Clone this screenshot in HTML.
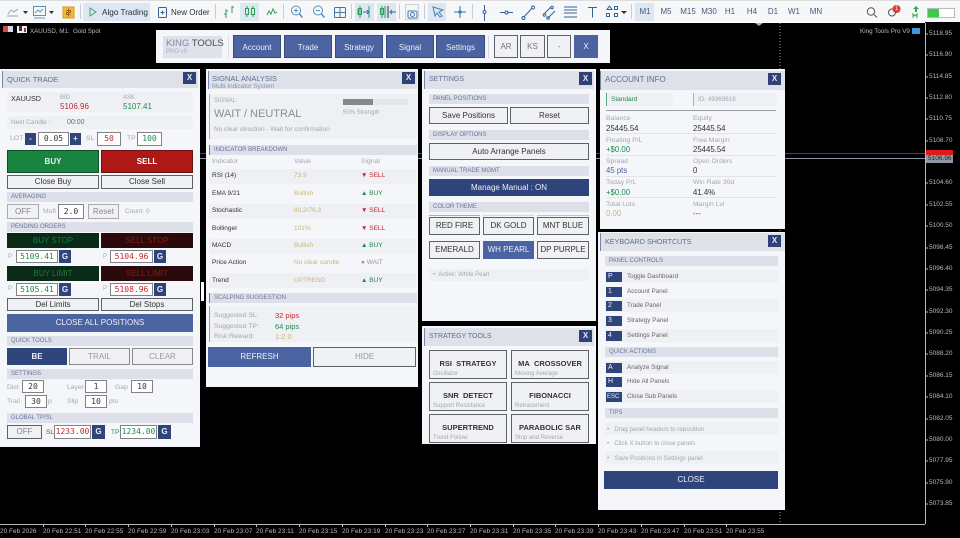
<!DOCTYPE html>
<html><head><meta charset="utf-8"><style>
html,body{margin:0;padding:0;background:#000}
#r{position:relative;width:960px;height:538px;overflow:hidden;background:#000;font-family:"Liberation Sans",sans-serif;font-size:8px;color:#333;filter:blur(.3px)}
#r div,#r svg{position:absolute}
.t{white-space:nowrap;height:10px;line-height:10px}
.p{background:#f5f6fa}
.h{background:#dfe1e9;border-left:1px solid #7486ad}
.ht{font-size:7.500px;color:#5d6d94;white-space:nowrap;height:10px;line-height:10px}
.x{background:#2f4176;color:#e8eaf4;font-weight:bold;font-size:8px;text-align:center}
.b{background:#dde0e8;color:#66759a;font-size:6px;line-height:10px;height:10px;white-space:nowrap;text-indent:4px}
.btn{background:#f0f1f5;border:1px solid #5f6168;box-sizing:border-box;text-align:center;color:#333;white-space:nowrap}
.blue{background:#4b63a0;color:#eef0f8;text-align:center;white-space:nowrap}
.navy{background:#30447c;color:#eef0f8;text-align:center;white-space:nowrap}
.i{background:#fff;border:1px solid #808288;box-sizing:border-box;font-family:"DejaVu Sans Mono","Liberation Mono",monospace;font-size:8px;text-align:center;white-space:nowrap;color:#333}
.gr{color:#1f8a4c}.rd{color:#c0272d}
.l{color:#a4a7b0;font-size:6.800px}
.row{background:#eff0f4}
.ax{color:#b8b8b8;font-size:6.500px;white-space:nowrap;height:9px;line-height:9px}
.tb{color:#2b2f3a;font-size:8.200px;white-space:nowrap;height:12px;line-height:12px}
.tf{color:#44597f;font-size:8px;white-space:nowrap;height:12px;line-height:12px;text-align:center;width:20px;top:6px}
.sep{background:#c8ccd2;width:1px;top:4px;height:15px}
.hi{background:#dce7f3}
.gd{background:#e2e3e7;height:1px}
.r{font-size:6.500px}
.k{font-size:6.300px;color:#666;left:627px}
.kb{left:606px;width:16px;height:10px;line-height:10px;font-size:7px;text-align:left;text-indent:2px}
.st{font-weight:bold;font-size:7.500px;width:78px;height:29px;line-height:25px}
.v{font-size:7.800px}
</style></head><body><div id="r">

<!-- toolbar -->
<div style="left:0;top:0;width:960px;height:22px;background:#f6f7f8"></div>
<div style="left:0;top:0;width:960px;height:1px;background:#ddd"></div>
<div style="left:0;top:22px;width:925px;height:1px;background:#fff"></div>
<div class="hi" style="left:83px;top:3px;width:67px;height:18px"></div>
<div class="hi" style="left:240px;top:3px;width:19px;height:18px"></div>
<div class="hi" style="left:355px;top:3px;width:19px;height:18px"></div>
<div class="hi" style="left:377px;top:3px;width:19px;height:18px"></div>
<div class="hi" style="left:428px;top:3px;width:18px;height:18px"></div>
<div class="hi" style="left:635px;top:3px;width:19px;height:18px"></div>
<div class="sep" style="left:80px"></div><div class="sep" style="left:215px"></div><div class="sep" style="left:283px"></div><div class="sep" style="left:351px"></div><div class="sep" style="left:399px"></div><div class="sep" style="left:424px"></div><div class="sep" style="left:472px"></div><div class="sep" style="left:631px"></div>
<svg style="left:0;top:0" width="960" height="22" fill="none" stroke-width="1">
<path d="M7 16h11M8 14l3-4 3 2 4-3" stroke="#8fa6c8"/>
<path d="M23 11h5l-2.500 3z" fill="#333"/>
<rect x="33.500" y="6.500" width="12" height="9" stroke="#5b8fb8"/><path d="M35 13l3-3 2 2 3-3M34 18h11" stroke="#5aa"/>
<path d="M49 11h5l-2.500 3z" fill="#333"/>
<rect x="63" y="7" width="11" height="11" fill="#f0b93a" stroke="#d99a1e"/><path d="M68.500 8.500v8M66.500 10.500h4v2h-4v2h4" stroke="#a0651a"/>
<path d="M90 8l6 4-6 4z" stroke="#4aa36a"/>
<rect x="158.500" y="7.500" width="8" height="10" rx="1" stroke="#3b5f9a"/><path d="M160.500 12.500h4M162.500 10.500v4" stroke="#3b5f9a"/>
<path d="M226 9v9M224 14h2M226 11h2M232 6v7M232 7h2" stroke="#2aa052"/>
<path d="M247 6v11M253 6v11" stroke="#2aa052"/><rect x="245.500" y="8.500" width="3" height="6" stroke="#2aa052" fill="#dce7f3"/><rect x="251.500" y="8.500" width="3" height="6" stroke="#2aa052" fill="#dce7f3"/>
<path d="M267 15l2-4 2 3 2-5 2 4 2-1" stroke="#2aa052"/>
<circle cx="296" cy="10.500" r="4.500" stroke="#5a8fb5"/><path d="M299.500 14l3 3.500" stroke="#5a8fb5" stroke-width="1.500"/><path d="M294 10.500h4M296 8.500v4" stroke="#5a8fb5"/>
<circle cx="318" cy="10.500" r="4.500" stroke="#5a8fb5"/><path d="M321.500 14l3 3.500" stroke="#5a8fb5" stroke-width="1.500"/><path d="M316 10.500h4" stroke="#5a8fb5"/>
<rect x="334.500" y="7.500" width="11" height="10" rx="1" stroke="#3c78b0"/><path d="M340 7.500v10M334.500 12.500h11" stroke="#3c78b0"/>
<path d="M360 6v12M358 9v6M369 6v12" stroke="#2aa052"/><rect x="358.500" y="8.500" width="3" height="6" stroke="#2aa052"/><path d="M363 12h6M367 10l2 2-2 2" stroke="#2f6fb0"/>
<path d="M382 6v12M385 6v12" stroke="#2aa052"/><rect x="380.500" y="8.500" width="3" height="6" stroke="#2aa052"/><path d="M388 6v12" stroke="#333"/><path d="M390 12h6M392 10l-2 2 2 2" stroke="#2f6fb0"/>
<rect x="405.500" y="4.500" width="13" height="15" stroke="#aaa" stroke-dasharray="1 1"/><rect x="408" y="11" width="9" height="7" rx="1" stroke="#3f78ad"/><circle cx="412.500" cy="14.500" r="2" stroke="#3f78ad"/>
<path d="M433 7l10 3-4 2 3 4-2 1-3-4-2 3z" stroke="#4a80b5"/>
<path d="M460 6v12M454 12h12" stroke="#2f7cb5"/><circle cx="460" cy="12" r="1.200" stroke="#2f7cb5"/>
<path d="M484.500 5v16" stroke="#34639a"/><circle cx="484.500" cy="12" r="1.500" stroke="#34639a" fill="#f6f7f8"/>
<path d="M500 12.500h13" stroke="#34639a"/><circle cx="506.500" cy="12.500" r="1.500" stroke="#34639a" fill="#f6f7f8"/>
<path d="M523 18l10-11" stroke="#34639a"/><circle cx="523.500" cy="18" r="1.500" stroke="#34639a" fill="#f6f7f8"/><circle cx="533" cy="7.500" r="1.500" stroke="#34639a" fill="#f6f7f8"/>
<path d="M544 14l7-7M548 18l7-7" stroke="#34639a"/><circle cx="544.500" cy="15" r="1.300" stroke="#34639a"/><circle cx="552" cy="7.500" r="1.300" stroke="#34639a"/><circle cx="548" cy="18" r="1.300" stroke="#34639a"/>
<path d="M564 7h13M564 10h13M564 13h13M564 17h13" stroke="#34639a"/>
<path d="M588 7.500h9M592.500 7.500v10" stroke="#34639a"/>
<path d="M609.500 6l2.500 3.500h-5z" stroke="#34639a"/><rect x="614.500" y="6.500" width="3" height="3" stroke="#34639a"/><rect x="606.500" y="13.500" width="3" height="3" stroke="#34639a"/><rect x="614.500" y="13.500" width="3" height="3" stroke="#34639a"/>
<path d="M621 11h6l-3 3z" fill="#333"/>
<circle cx="871" cy="11.500" r="3.700" stroke="#555"/><path d="M874 14.500l3 3" stroke="#555"/>
<circle cx="892" cy="12.500" r="3.500" stroke="#555"/><circle cx="896.500" cy="9" r="4" fill="#e23a2e"/>
<path d="M916 6l3 3h-2v3h-2v-3h-2z" fill="#2faa52"/><path d="M913 18v-4l2 2 2-2v4" stroke="#2faa52"/>
<rect x="927.500" y="8.500" width="27" height="9" stroke="#bbb" fill="#fff"/><rect x="928" y="9" width="11" height="8" fill="#3fc94a"/>
</svg>
<div class="tb" style="left:102px;top:7px">Algo Trading</div>
<div class="tb" style="left:171px;top:7px;font-size:8px">New Order</div>
<div class="tf" style="left:635px">M1</div><div class="tf" style="left:656px">M5</div><div class="tf" style="left:678px">M15</div><div class="tf" style="left:699px">M30</div><div class="tf" style="left:720px">H1</div><div class="tf" style="left:742px">H4</div><div class="tf" style="left:763px">D1</div><div class="tf" style="left:784px">W1</div><div class="tf" style="left:806px">MN</div>
<div class="t" style="left:895px;top:4px;font-size:6px;color:#fff">1</div>

<!-- chart -->
<svg style="left:0;top:23px" width="960" height="515" fill="none">
<rect x="3" y="3" width="10" height="6" fill="#d8d8e8"/><rect x="3" y="3" width="5" height="6" fill="#d44"/>
<rect x="17" y="3" width="10" height="7" fill="#eee"/><rect x="19" y="3" width="3" height="5" fill="#334"/><rect x="24" y="5" width="2" height="4" fill="#a33"/>
<path d="M925.500 0V501" stroke="#b8b8b8"/>
<path d="M0 501.500H925" stroke="#b8b8b8"/>
<path d="M925 11h3M925 32h3M925 54h3M925 75h3M925 96h3M925 118h3M925 160h3M925 182h3M925 203h3M925 225h3M925 246h3M925 267h3M925 289h3M925 310h3M925 331h3M925 353h3M925 374h3M925 396h3M925 417h3M925 438h3M925 460h3M925 481h3" stroke="#b8b8b8"/>
<path d="M43.500 501v3M85.500 501v3M128.500 501v3M171.500 501v3M214.500 501v3M256.500 501v3M299.500 501v3M342.500 501v3M385.500 501v3M427.500 501v3M470.500 501v3M513.500 501v3M555.500 501v3M598.500 501v3M641.500 501v3M684.500 501v3M726.500 501v3" stroke="#b8b8b8"/>
<path d="M0 130.500H925" stroke="#a01c1c"/>
<path d="M0 135.500H925" stroke="#8a93a0"/>
<path d="M780 0V500" stroke="#9a9a9a" stroke-dasharray="1 2"/>
<path d="M755 0h8l-4 3z" fill="#aaa"/>
<rect x="201" y="259" width="3" height="19" fill="#fff"/>
<path d="M645 204h20" stroke="#2aa052" stroke-width="2"/>
<rect x="912" y="5" width="8" height="6" fill="#3a9ae0"/>
</svg>
<div class="ax" style="left:30px;top:27px;font-size:6.200px">XAUUSD, M1:&nbsp; Gold Spot</div>
<div class="ax" style="left:860px;top:27px;font-size:6.300px">King Tools Pro V9</div>
<!-- price axis -->
<div class="ax" style="left:929px;top:29px">5118.95</div><div class="ax" style="left:929px;top:50px">5116.90</div><div class="ax" style="left:929px;top:72px">5114.85</div><div class="ax" style="left:929px;top:93px">5112.80</div><div class="ax" style="left:929px;top:114px">5110.75</div><div class="ax" style="left:929px;top:136px">5108.70</div><div class="ax" style="left:929px;top:178px">5104.60</div><div class="ax" style="left:929px;top:200px">5102.55</div><div class="ax" style="left:929px;top:221px">5100.50</div><div class="ax" style="left:929px;top:243px">5098.45</div><div class="ax" style="left:929px;top:264px">5096.40</div><div class="ax" style="left:929px;top:285px">5094.35</div><div class="ax" style="left:929px;top:307px">5092.30</div><div class="ax" style="left:929px;top:328px">5090.25</div><div class="ax" style="left:929px;top:349px">5088.20</div><div class="ax" style="left:929px;top:371px">5086.15</div><div class="ax" style="left:929px;top:392px">5084.10</div><div class="ax" style="left:929px;top:414px">5082.05</div><div class="ax" style="left:929px;top:435px">5080.00</div><div class="ax" style="left:929px;top:456px">5077.95</div><div class="ax" style="left:929px;top:478px">5075.90</div><div class="ax" style="left:929px;top:499px">5073.85</div>
<div style="left:926px;top:150px;width:27px;height:6px;background:#e01818"></div>
<div class="ax" style="left:926px;top:155px;width:27px;height:8px;line-height:8px;background:#8e97a3;color:#222;text-indent:2px">5106.96</div>
<!-- time axis -->
<div class="ax" style="left:0;top:527px">20 Feb 2026</div><div class="ax" style="left:43px;top:527px">20 Feb 22:51</div><div class="ax" style="left:85px;top:527px">20 Feb 22:55</div><div class="ax" style="left:128px;top:527px">20 Feb 22:59</div><div class="ax" style="left:171px;top:527px">20 Feb 23:03</div><div class="ax" style="left:214px;top:527px">20 Feb 23:07</div><div class="ax" style="left:256px;top:527px">20 Feb 23:11</div><div class="ax" style="left:299px;top:527px">20 Feb 23:15</div><div class="ax" style="left:342px;top:527px">20 Feb 23:19</div><div class="ax" style="left:385px;top:527px">20 Feb 23:23</div><div class="ax" style="left:427px;top:527px">20 Feb 23:27</div><div class="ax" style="left:470px;top:527px">20 Feb 23:31</div><div class="ax" style="left:513px;top:527px">20 Feb 23:35</div><div class="ax" style="left:555px;top:527px">20 Feb 23:39</div><div class="ax" style="left:598px;top:527px">20 Feb 23:43</div><div class="ax" style="left:641px;top:527px">20 Feb 23:47</div><div class="ax" style="left:684px;top:527px">20 Feb 23:51</div><div class="ax" style="left:726px;top:527px">20 Feb 23:55</div>

<!-- top bar -->
<div class="p" style="left:156px;top:30px;width:454px;height:33px"></div>
<div style="left:163px;top:36px;width:59px;height:22px;background:#e0e2ea"></div>
<div class="t" style="left:166px;top:38px;font-size:9.500px;height:11px;line-height:11px;color:#7d8aa8">KING <span style="color:#4a4f5e">TOOLS</span></div>
<div class="t" style="left:166px;top:47px;font-size:6px;color:#aab">PRO v9</div>
<div style="left:228px;top:36px;width:1px;height:22px;background:#dcdee5"></div>
<div class="blue" style="left:233px;top:35px;width:48px;height:23px;line-height:23px;border:1px solid #39497c;box-sizing:border-box">Account</div>
<div class="blue" style="left:284px;top:35px;width:48px;height:23px;line-height:23px;border:1px solid #39497c;box-sizing:border-box">Trade</div>
<div class="blue" style="left:335px;top:35px;width:48px;height:23px;line-height:23px;border:1px solid #39497c;box-sizing:border-box">Strategy</div>
<div class="blue" style="left:386px;top:35px;width:48px;height:23px;line-height:23px;border:1px solid #39497c;box-sizing:border-box">Signal</div>
<div class="blue" style="left:436px;top:35px;width:49px;height:23px;line-height:23px;border:1px solid #39497c;box-sizing:border-box">Settings</div>
<div style="left:488px;top:36px;width:1px;height:22px;background:#d5d7de"></div>
<div class="btn" style="left:494px;top:35px;width:24px;height:23px;line-height:21px;color:#777">AR</div>
<div class="btn" style="left:520px;top:35px;width:25px;height:23px;line-height:21px;color:#777">KS</div>
<div class="btn" style="left:547px;top:35px;width:24px;height:23px;line-height:21px;color:#777">-</div>
<div class="blue" style="left:574px;top:35px;width:24px;height:23px;line-height:23px">X</div>

<!-- QUICK TRADE -->
<div class="p" style="left:0;top:69px;width:200px;height:378px"></div>
<div class="h" style="left:2px;top:71px;width:195px;height:17px"></div>
<div class="ht" style="left:7px;top:75px">QUICK TRADE</div>
<div class="x" style="left:183px;top:72px;width:13px;height:12px;line-height:12px">X</div>
<div class="row" style="left:7px;top:92px;width:186px;height:20px"></div>
<div class="t" style="left:11px;top:94px;font-size:7.200px">XAUUSD</div>
<div class="t l" style="left:60px;top:93px;font-size:6px">BID</div><div class="t rd" style="left:60px;top:102px;font-size:8px">5106.96</div>
<div class="t l" style="left:123px;top:93px;font-size:6px">ASK</div><div class="t gr" style="left:123px;top:102px;font-size:8px">5107.41</div>
<div class="row" style="left:7px;top:116px;width:186px;height:13px"></div>
<div class="t l" style="left:11px;top:118px;font-size:6.500px">Next Candle :</div><div class="t" style="left:67px;top:118px;font-size:7px;color:#5d6d94">00:00</div>
<div class="t l" style="left:10px;top:134px">LOT</div>
<div class="navy" style="left:25px;top:133px;width:11px;height:12px;line-height:11px;font-weight:bold">-</div>
<div class="i" style="left:38px;top:132px;width:31px;height:14px;line-height:12px">0.05</div>
<div class="navy" style="left:70px;top:133px;width:11px;height:12px;line-height:11px;font-weight:bold">+</div>
<div class="t l" style="left:86px;top:134px">SL</div><div class="i rd" style="left:97px;top:132px;width:24px;height:14px;line-height:12px">50</div>
<div class="t l" style="left:127px;top:134px">TP</div><div class="i gr" style="left:137px;top:132px;width:25px;height:14px;line-height:12px">100</div>
<div style="left:7px;top:150px;width:92px;height:23px;line-height:21px;background:#17843f;border:1px solid #0f4f28;box-sizing:border-box;color:#eef;text-align:center;font-weight:bold">BUY</div>
<div style="left:101px;top:150px;width:92px;height:23px;line-height:21px;background:#b01818;border:1px solid #6a1212;box-sizing:border-box;color:#fff;text-align:center;font-weight:bold">SELL</div>
<div class="btn" style="left:7px;top:175px;width:92px;height:14px;line-height:12px">Close Buy</div>
<div class="btn" style="left:101px;top:175px;width:92px;height:14px;line-height:12px">Close Sell</div>
<div class="b" style="left:7px;top:192px;width:186px">AVERAGING</div>
<div class="btn" style="left:7px;top:204px;width:32px;height:15px;line-height:13px;color:#888;border-color:#aaa">OFF</div>
<div class="t l" style="left:43px;top:207px">Mult</div>
<div class="i" style="left:58px;top:204px;width:26px;height:15px;line-height:13px">2.0</div>
<div class="btn" style="left:88px;top:204px;width:31px;height:15px;line-height:13px;color:#888;border-color:#aaa">Reset</div>
<div class="t l" style="left:125px;top:207px;font-size:6.500px">Count: 0</div>
<div class="b" style="left:7px;top:222px;width:186px">PENDING ORDERS</div>
<div class="gr" style="left:7px;top:233px;width:92px;height:15px;line-height:15px;background:#0a2a18;text-align:center;color:#1c7a40">BUY STOP</div>
<div class="rd" style="left:101px;top:233px;width:92px;height:15px;line-height:15px;background:#2a0a0a;text-align:center;color:#8b1a1a">SELL STOP</div>
<div class="t l" style="left:8px;top:252px;font-size:6px">P</div><div class="i gr" style="left:16px;top:250px;width:42px;height:13px;line-height:11px">5109.41</div><div class="navy" style="left:59px;top:250px;width:12px;height:13px;line-height:13px;font-weight:bold">G</div>
<div class="t l" style="left:103px;top:252px;font-size:6px">P</div><div class="i rd" style="left:110px;top:250px;width:43px;height:13px;line-height:11px">5104.96</div><div class="navy" style="left:154px;top:250px;width:12px;height:13px;line-height:13px;font-weight:bold">G</div>
<div style="left:7px;top:266px;width:92px;height:15px;line-height:15px;background:#0a2a18;text-align:center;color:#1c7a40">BUY LIMIT</div>
<div style="left:101px;top:266px;width:92px;height:15px;line-height:15px;background:#2a0a0a;text-align:center;color:#8b1a1a">SELL LIMIT</div>
<div class="t l" style="left:8px;top:284px;font-size:6px">P</div><div class="i gr" style="left:16px;top:283px;width:42px;height:13px;line-height:11px">5105.41</div><div class="navy" style="left:59px;top:283px;width:12px;height:13px;line-height:13px;font-weight:bold">G</div>
<div class="t l" style="left:103px;top:284px;font-size:6px">P</div><div class="i rd" style="left:110px;top:283px;width:43px;height:13px;line-height:11px">5108.96</div><div class="navy" style="left:154px;top:283px;width:12px;height:13px;line-height:13px;font-weight:bold">G</div>
<div class="btn" style="left:7px;top:298px;width:92px;height:13px;line-height:11px">Del Limits</div>
<div class="btn" style="left:101px;top:298px;width:92px;height:13px;line-height:11px">Del Stops</div>
<div class="blue" style="left:7px;top:314px;width:186px;height:18px;line-height:18px">CLOSE ALL POSITIONS</div>
<div class="b" style="left:7px;top:336px;width:186px">QUICK TOOLS</div>
<div class="navy" style="left:7px;top:348px;width:60px;height:17px;line-height:17px;font-weight:bold">BE</div>
<div class="btn" style="left:69px;top:348px;width:61px;height:17px;line-height:15px;color:#999;border-color:#888">TRAIL</div>
<div class="btn" style="left:132px;top:348px;width:61px;height:17px;line-height:15px;color:#999;border-color:#888">CLEAR</div>
<div class="b" style="left:7px;top:369px;width:186px">SETTINGS</div>
<div class="t l" style="left:7px;top:383px">Dist</div><div class="i" style="left:22px;top:380px;width:22px;height:13px;line-height:11px">20</div>
<div class="t l" style="left:67px;top:383px">Layer</div><div class="i" style="left:85px;top:380px;width:22px;height:13px;line-height:11px">1</div>
<div class="t l" style="left:115px;top:383px">Gap</div><div class="i" style="left:131px;top:380px;width:22px;height:13px;line-height:11px">10</div>
<div class="t l" style="left:7px;top:397px">Trail</div><div class="i" style="left:25px;top:395px;width:22px;height:13px;line-height:11px">30</div><div class="t l" style="left:48px;top:397px">p</div>
<div class="t l" style="left:67px;top:397px">Slip</div><div class="i" style="left:85px;top:395px;width:22px;height:13px;line-height:11px">10</div><div class="t l" style="left:109px;top:397px">pts</div>
<div class="b" style="left:7px;top:413px;width:186px">GLOBAL TP/SL</div>
<div class="btn" style="left:7px;top:425px;width:35px;height:14px;line-height:12px;color:#888">OFF</div>
<div class="t rd" style="left:46px;top:428px;font-size:6.500px">SL</div><div class="i rd" style="left:54px;top:425px;width:37px;height:14px;line-height:12px">1233.00</div><div class="navy" style="left:92px;top:425px;width:13px;height:14px;line-height:14px;font-weight:bold">G</div>
<div class="t gr" style="left:111px;top:428px;font-size:6.500px">TP</div><div class="i gr" style="left:120px;top:425px;width:37px;height:14px;line-height:12px">1234.00</div><div class="navy" style="left:158px;top:425px;width:13px;height:14px;line-height:14px;font-weight:bold">G</div>

<!-- SIGNAL -->
<div class="p" style="left:206px;top:69px;width:212px;height:318px"></div>
<div class="h" style="left:208px;top:71px;width:208px;height:18px"></div>
<div class="ht" style="left:212px;top:74px">SIGNAL ANALYSIS</div>
<div class="t" style="left:212px;top:82px;font-size:6.300px;color:#8a93aa">Multi-Indicator System</div>
<div class="x" style="left:402px;top:72px;width:13px;height:12px;line-height:12px">X</div>
<div class="row" style="left:209px;top:94px;width:207px;height:45px;border-left:1px solid #aab"></div>
<div class="t l" style="left:214px;top:96px;font-size:6px">SIGNAL:</div>
<div class="t" style="left:214px;top:107px;font-size:11px;height:15px;line-height:15px;color:#8a8c93">WAIT / NEUTRAL</div>
<div style="left:343px;top:99px;width:65px;height:6px;background:#e4e6ec"></div><div style="left:343px;top:99px;width:30px;height:6px;background:#85878e"></div>
<div class="t l" style="left:343px;top:108px;font-size:6px">50% Strength</div>
<div class="t l" style="left:214px;top:125px;font-size:6.500px">No clear direction - Wait for confirmation</div>
<div class="b" style="left:209px;top:145px;width:207px;border-left:1px solid #778">INDICATOR BREAKDOWN</div>
<div class="t l" style="left:212px;top:157px">Indicator</div><div class="t l" style="left:294px;top:157px">Value</div><div class="t l" style="left:361px;top:157px">Signal</div>
<div class="row" style="left:209px;top:169px;width:207px;height:15px"></div>
<div class="row" style="left:209px;top:204px;width:207px;height:15px"></div>
<div class="row" style="left:209px;top:239px;width:207px;height:15px"></div>
<div class="row" style="left:209px;top:273px;width:207px;height:15px"></div>
<div class="t r" style="left:212px;top:171px">RSI (14)</div><div class="t r" style="left:294px;top:171px;color:#c8b678">73.9</div><div class="t rd r" style="left:361px;top:171px">▼ SELL</div>
<div class="t r" style="left:212px;top:189px">EMA 9/21</div><div class="t r" style="left:294px;top:189px;color:#c8b678">Bullish</div><div class="t gr r" style="left:361px;top:189px">▲ BUY</div>
<div class="t r" style="left:212px;top:206px">Stochastic</div><div class="t r" style="left:294px;top:206px;color:#c8b678">80.2/76.3</div><div class="t rd r" style="left:361px;top:206px">▼ SELL</div>
<div class="t r" style="left:212px;top:224px">Bollinger</div><div class="t r" style="left:294px;top:224px;color:#c8b678">101%</div><div class="t rd r" style="left:361px;top:224px">▼ SELL</div>
<div class="t r" style="left:212px;top:241px">MACD</div><div class="t r" style="left:294px;top:241px;color:#c8b678">Bullish</div><div class="t gr r" style="left:361px;top:241px">▲ BUY</div>
<div class="t r" style="left:212px;top:258px">Price Action</div><div class="t r" style="left:294px;top:258px;color:#c8b678">No clear candle</div><div class="t r" style="left:361px;top:258px;color:#999">● WAIT</div>
<div class="t r" style="left:212px;top:276px">Trend</div><div class="t r" style="left:294px;top:276px;color:#c8b678">UPTREND</div><div class="t gr r" style="left:361px;top:276px">▲ BUY</div>
<div class="b" style="left:209px;top:293px;width:207px;border-left:1px solid #778">SCALPING SUGGESTION</div>
<div class="row" style="left:209px;top:306px;width:207px;height:36px;border-left:1px solid #99a"></div>
<div class="t l" style="left:214px;top:311px">Suggested SL:</div><div class="t rd" style="left:275px;top:311px;font-size:7.500px">32 pips</div>
<div class="t l" style="left:214px;top:322px">Suggested TP:</div><div class="t gr" style="left:275px;top:322px;font-size:7.500px">64 pips</div>
<div class="t l" style="left:214px;top:332px">Risk:Reward:</div><div class="t" style="left:275px;top:332px;font-size:7.500px;color:#c8b678">1:2.0</div>
<div class="blue" style="left:208px;top:347px;width:103px;height:20px;line-height:20px;font-size:8px">REFRESH</div>
<div class="btn" style="left:313px;top:347px;width:103px;height:20px;line-height:18px;color:#999;font-size:8px">HIDE</div>

<!-- SETTINGS -->
<div class="p" style="left:422px;top:69px;width:174px;height:252px"></div>
<div class="h" style="left:424px;top:71px;width:169px;height:18px"></div>
<div class="ht" style="left:429px;top:75px;font-size:7px">SETTINGS</div>
<div class="x" style="left:579px;top:72px;width:13px;height:13px;line-height:13px">X</div>
<div class="b" style="left:429px;top:94px;width:160px">PANEL POSITIONS</div>
<div class="btn" style="left:429px;top:107px;width:79px;height:17px;line-height:15px">Save Positions</div>
<div class="btn" style="left:510px;top:107px;width:79px;height:17px;line-height:15px">Reset</div>
<div class="b" style="left:429px;top:130px;width:160px">DISPLAY OPTIONS</div>
<div class="btn" style="left:429px;top:143px;width:160px;height:17px;line-height:15px">Auto Arrange Panels</div>
<div class="b" style="left:429px;top:166px;width:160px">MANUAL TRADE MGMT</div>
<div class="navy" style="left:429px;top:179px;width:160px;height:17px;line-height:17px">Manage Manual : ON</div>
<div class="b" style="left:429px;top:202px;width:160px">COLOR THEME</div>
<div style="left:429px;top:215px;width:51px;height:1px;background:#e09a9a"></div><div style="left:483px;top:215px;width:51px;height:1px;background:#e8d89a"></div><div style="left:537px;top:215px;width:52px;height:1px;background:#b4c4e4"></div>
<div class="btn" style="left:429px;top:217px;width:51px;height:18px;line-height:16px">RED FIRE</div>
<div class="btn" style="left:483px;top:217px;width:51px;height:18px;line-height:16px">DK GOLD</div>
<div class="btn" style="left:537px;top:217px;width:52px;height:18px;line-height:16px">MNT BLUE</div>
<div class="btn" style="left:429px;top:241px;width:51px;height:18px;line-height:16px">EMERALD</div>
<div class="blue" style="left:483px;top:241px;width:51px;height:18px;line-height:18px">WH PEARL</div>
<div class="btn" style="left:537px;top:241px;width:52px;height:18px;line-height:16px">DP PURPLE</div>
<div class="row" style="left:429px;top:269px;width:160px;height:12px"></div>
<div class="t l" style="left:433px;top:270px;font-size:6px">• &nbsp;Active: White Pearl</div>

<!-- STRATEGY -->
<div class="p" style="left:422px;top:326px;width:174px;height:118px"></div>
<div class="h" style="left:424px;top:328px;width:169px;height:18px"></div>
<div class="ht" style="left:429px;top:332px;font-size:7px">STRATEGY TOOLS</div>
<div class="x" style="left:579px;top:330px;width:13px;height:12px;line-height:12px">X</div>
<div class="btn st" style="left:429px;top:350px">RSI&nbsp; STRATEGY</div>
<div class="btn st" style="left:511px;top:350px">MA&nbsp; CROSSOVER</div>
<div class="btn st" style="left:429px;top:382px">SNR&nbsp; DETECT</div>
<div class="btn st" style="left:511px;top:382px">FIBONACCI</div>
<div class="btn st" style="left:429px;top:414px">SUPERTREND</div>
<div class="btn st" style="left:511px;top:414px">PARABOLIC SAR</div>
<div class="t l" style="left:433px;top:369px;font-size:6px">Oscillator</div><div class="t l" style="left:515px;top:369px;font-size:6px">Moving Average</div>
<div class="t l" style="left:433px;top:401px;font-size:6px">Support Resistance</div><div class="t l" style="left:515px;top:401px;font-size:6px">Retracement</div>
<div class="t l" style="left:433px;top:433px;font-size:6px">Trend Follow</div><div class="t l" style="left:515px;top:433px;font-size:6px">Stop and Reverse</div>

<!-- ACCOUNT -->
<div class="p" style="left:600px;top:69px;width:185px;height:160px"></div>
<div class="h" style="left:600px;top:71px;width:184px;height:19px"></div>
<div class="ht" style="left:605px;top:75px;font-size:8px">ACCOUNT INFO</div>
<div class="x" style="left:768px;top:73px;width:13px;height:12px;line-height:12px">X</div>
<div class="row" style="left:606px;top:93px;width:66px;height:13px;border-left:1px solid #5aa87a"></div>
<div class="t gr" style="left:611px;top:95px;font-size:6.500px">Standard</div>
<div class="row" style="left:693px;top:93px;width:83px;height:13px;border-left:1px solid #aab"></div>
<div class="t l" style="left:698px;top:95px;font-size:6.300px">ID: 49369616</div>
<div style="left:606px;top:110px;width:170px;height:1px;background:#9a9eaa"></div>
<div class="t l" style="left:606px;top:114px">Balance</div><div class="t v" style="left:606px;top:124px">25445.54</div>
<div class="t l" style="left:693px;top:114px">Equity</div><div class="t v" style="left:693px;top:124px">25445.54</div>
<div class="gd" style="left:606px;top:133px;width:170px"></div>
<div class="t l" style="left:606px;top:136px">Floating P/L</div><div class="t gr v" style="left:606px;top:145px">+$0.00</div>
<div class="t l" style="left:693px;top:136px">Free Margin</div><div class="t v" style="left:693px;top:145px">25445.54</div>
<div class="gd" style="left:606px;top:155px;width:170px"></div>
<div class="t l" style="left:606px;top:157px">Spread</div><div class="t v" style="left:606px;top:166px;color:#4b63a0">45 pts</div>
<div class="t l" style="left:693px;top:157px">Open Orders</div><div class="t v" style="left:693px;top:166px">0</div>
<div class="gd" style="left:606px;top:176px;width:170px"></div>
<div class="t l" style="left:606px;top:178px">Today P/L</div><div class="t gr v" style="left:606px;top:188px">+$0.00</div>
<div class="t l" style="left:693px;top:178px">Win Rate 30d</div><div class="t v" style="left:693px;top:188px">41.4%</div>
<div class="gd" style="left:606px;top:197px;width:170px"></div>
<div class="t l" style="left:606px;top:200px">Total Lots</div><div class="t v" style="left:606px;top:209px;color:#c8b678">0.00</div>
<div class="t l" style="left:693px;top:200px">Margin Lvl</div><div class="t rd v" style="left:693px;top:209px">---</div>

<!-- KEYBOARD -->
<div class="p" style="left:598px;top:232px;width:187px;height:278px"></div>
<div class="h" style="left:600px;top:233px;width:184px;height:18px"></div>
<div class="ht" style="left:605px;top:237px;font-size:7.200px">KEYBOARD SHORTCUTS</div>
<div class="x" style="left:768px;top:235px;width:13px;height:12px;line-height:12px">X</div>
<div class="b" style="left:605px;top:256px;width:173px">PANEL CONTROLS</div>
<div class="row" style="left:605px;top:270px;width:173px;height:13px"></div>
<div class="row" style="left:605px;top:299px;width:173px;height:13px"></div>
<div class="row" style="left:605px;top:329px;width:173px;height:13px"></div>
<div class="navy kb" style="top:272px">P</div><div class="t k" style="top:272px">Toggle Dashboard</div>
<div class="navy kb" style="top:287px">1</div><div class="t k" style="top:287px">Account Panel</div>
<div class="navy kb" style="top:301px">2</div><div class="t k" style="top:301px">Trade Panel</div>
<div class="navy kb" style="top:316px">3</div><div class="t k" style="top:316px">Strategy Panel</div>
<div class="navy kb" style="top:331px">4</div><div class="t k" style="top:331px">Settings Panel</div>
<div class="b" style="left:605px;top:347px;width:173px">QUICK ACTIONS</div>
<div class="row" style="left:605px;top:361px;width:173px;height:13px"></div>
<div class="row" style="left:605px;top:390px;width:173px;height:13px"></div>
<div class="navy kb" style="top:363px">A</div><div class="t k" style="top:363px">Analyze Signal</div>
<div class="navy kb" style="top:377px">H</div><div class="t k" style="top:377px">Hide All Panels</div>
<div class="navy kb" style="top:392px;font-size:6px;text-indent:1px">ESC</div><div class="t k" style="top:392px">Close Sub Panels</div>
<div class="b" style="left:605px;top:408px;width:173px">TIPS</div>
<div class="row" style="left:605px;top:422px;width:173px;height:13px"></div>
<div class="row" style="left:605px;top:451px;width:173px;height:13px"></div>
<div class="t l" style="left:607px;top:425px;font-size:6.200px">•&nbsp; &nbsp;Drag panel headers to reposition</div>
<div class="t l" style="left:607px;top:439px;font-size:6.200px">•&nbsp; &nbsp;Click X button to close panels</div>
<div class="t l" style="left:607px;top:454px;font-size:6.200px">•&nbsp; &nbsp;Save Positions in Settings panel</div>
<div class="navy" style="left:604px;top:471px;width:174px;height:18px;line-height:18px;font-size:8px">CLOSE</div>

</div></body></html>
